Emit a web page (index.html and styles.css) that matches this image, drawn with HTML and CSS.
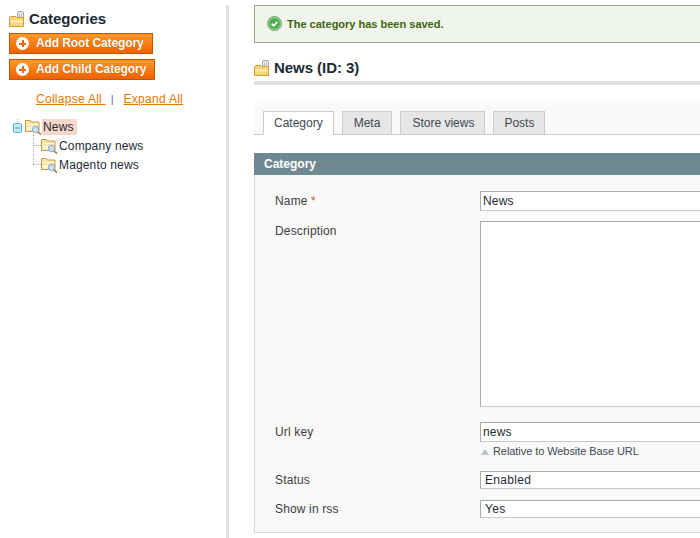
FILE: index.html
```html
<!DOCTYPE html>
<html lang="en">
<head>
<meta charset="utf-8">
<title>Categories</title>
<link rel="stylesheet" href="styles.css">
</head>
<body>
<div class="page">
  <aside class="side">
    <div class="side-head">
      <svg class="head-icon" viewBox="0 0 16 16" width="16" height="16"><use href="#cat"/></svg>
      <h3>Categories</h3>
    </div>
    <button class="btn btn-root"><span class="plus"></span>Add Root Category</button>
    <button class="btn btn-child"><span class="plus"></span>Add Child Category</button>
    <div class="links"><a href="#">Collapse All&nbsp;</a><span class="sep">|</span><a href="#">Expand All</a></div>
    <div class="tree">
      <div class="node root">
        <svg class="toggle" width="10" height="16" viewBox="0 0 10 16"><path d="M5 0v4" stroke="#aaa" stroke-dasharray="1 1"/><rect x=".5" y="4.500" width="8" height="9" rx="1" fill="#c6e8f2" stroke="#55b6d2"/><path d="M2.500 9h4" stroke="#3a8fa8"/></svg>
        <svg class="folder" width="17" height="16" viewBox="0 0 17 16"><use href="#folder"/></svg>
        <span class="sel">News</span>
      </div>
      <div class="node child first">
        <svg class="folder" width="17" height="16" viewBox="0 0 17 16"><use href="#folder"/></svg>
        <span>Company news</span>
      </div>
      <div class="node child">
        <svg class="folder" width="17" height="16" viewBox="0 0 17 16"><use href="#folder"/></svg>
        <span>Magento news</span>
      </div>
    </div>
  </aside>
  <main class="main">
    <div class="msg">
      <svg width="15" height="15" viewBox="0 0 16 16"><circle cx="8" cy="8" r="7.500" fill="#8fcf8f" stroke="#7d9e7d"/><circle cx="8" cy="8" r="5.800" fill="#4fae4f"/><path d="M5 8.200l2.200 2.200L11 6.300" fill="none" stroke="#fff" stroke-width="1.800"/></svg>
      <span>The category has been saved.</span>
    </div>
    <div class="title">
      <svg class="head-icon" viewBox="0 0 16 16" width="16" height="16"><use href="#cat"/></svg>
      <h3>News (ID: 3)</h3>
    </div>
    <div class="tabs">
      <a class="tab active">Category</a>
      <a class="tab">Meta</a>
      <a class="tab">Store views</a>
      <a class="tab">Posts</a>
    </div>
    <div class="sec-head">Category</div>
    <div class="fieldset">
      <div class="row r-name"><label>Name <em>*</em></label><input type="text" value="News"></div>
      <div class="row r-desc"><label>Description</label><textarea></textarea></div>
      <div class="row r-url"><label>Url key</label>
        <div class="ctl"><input type="text" value="news"><p class="note">Relative to Website Base URL</p></div>
      </div>
      <div class="row r-status"><label>Status</label><select><option>Enabled</option></select></div>
      <div class="row r-rss"><label>Show in rss</label><select><option>Yes</option></select></div>
    </div>
  </main>
</div>
<svg class="defs" width="0" height="0">
  <defs>
    <g id="cat">
      <rect x="8.500" y="0.500" width="6" height="10" rx="1.500" fill="#ececec" stroke="#a5a5a5"/>
      <path d="M10.500 2.500v6M12.500 2.500v6" stroke="#bbb"/>
      <path d="M.5 15.500v-9l1.500-1h5l1 1h6.500v9z" fill="#f6d678" stroke="#d99b2e"/>
      <path d="M1 9.500h13v2H1z" fill="#fdf0b8"/>
    </g>
    <g id="folder">
      <path d="M.5 12.500v-11h5l1 1.500h7.500v9.500z" fill="#fbe6a4" stroke="#c99a45"/>
      <path d="M2 5h11v6.500H2z" fill="#fff8dc"/>
      <path d="M2 7h11" stroke="#f0d590"/>
      <circle cx="10.500" cy="10.500" r="3.200" fill="#c8e0f2" stroke="#8aa6bd"/>
      <path d="M13 13l3 2.500" stroke="#a86a2c" stroke-width="1.500"/>
    </g>
  </defs>
</svg>
</body>
</html>
```
FILE: styles.css
```css
* { box-sizing: border-box; }
html, body { margin: 0; height: 538px; overflow: hidden; background: #fff; }
body { font: 12px/16px Arial, "Liberation Sans", sans-serif; color: #2f2f2f; }
.page { display: flex; width: 1100px; height: 538px; padding-top: 5px; }
.defs { position: absolute; }

.side { width: 229px; flex: none; border-right: 3px solid #dfdfdf; padding: 5px 0 0 9px; }
.side-head { display: flex; align-items: center; gap: 4px; height: 18px; margin-bottom: 5px; }
.side-head h3, .title h3 { margin: 0; font-size: 15px; line-height: 18px; font-weight: bold; color: #1d2a33; letter-spacing: -.05px; }
.btn {
  display: flex; align-items: center; height: 21px; padding: 0 0 2px; margin: 0 0 5px; white-space: nowrap;
  font: bold 12px/16px Arial, "Liberation Sans", sans-serif; color: #fff; letter-spacing: -.1px;
  border: 1px solid #c25700; background: linear-gradient(#ff9a2e 0%, #fb8218 40%, #ee6200 100%);
  text-shadow: 0 0 1px #b35000; border-radius: 0;
}
.btn-root { width: 144px; }
.btn-child { width: 146px; }
.plus { width: 13px; height: 13px; margin: 2px 7px 0 6px; flex: none; border-radius: 50%; background:
  linear-gradient(#e9661a, #e9661a) center/7px 2px no-repeat,
  linear-gradient(#e9661a, #e9661a) center/2px 7px no-repeat, #fff; }
.links { display: flex; padding: 6px 0 0 27px; height: 31px; }
.links a { color: #ea7601; text-decoration: underline; letter-spacing: .28px; }
.links .sep { color: #6f5fa8; margin: 0 10px 0 5px; font-size: 11px; }
.tree { margin-top: 1px; padding-left: 4px; color: #1e2a35; }
.node { display: flex; align-items: center; height: 19px; position: relative; letter-spacing: .15px; }
.toggle { margin-right: 2px; }
.folder { flex: none; }
.sel { background: #f6d7c9; padding: 0 3px 0 1px; line-height: 16px; margin-left: 0; }
.child { padding-left: 28px; }
.child span { margin-left: 1px; }
.child::before { content: ""; position: absolute; left: 20px; width: 8px; height: 1px; top: 9px; border-top: 1px dotted #aaa; }
.child.first::after { content: ""; position: absolute; left: 20px; top: -2px; height: 30px; border-left: 1px dotted #aaa; }

.main { flex: none; width: 871px; margin-left: 25px; }
.msg {
  display: flex; align-items: center; gap: 5px; height: 38px; padding: 0 0 1px 12px;
  background: #eff5ea; border: 1px solid #95a486; font-size: 11px; font-weight: bold; color: #3d6611;
}
.title { display: flex; align-items: center; gap: 4px; height: 42px; padding-top: 11px; padding-bottom: 0; border-bottom: 4px solid #dfdfdf; }
.tabs {
  display: flex; align-items: flex-end; gap: 8px; height: 32px; margin-top: 18px; padding-left: 9px;
  background: #f9f9f9; border-bottom: 1px solid #ccc;
}
.tab {
  height: 24px; padding: 3px 10px 0; margin-bottom: -1px; border: 1px solid #ccc; background: #e6e6e6; color: #3d4a52; line-height: 17px;
}
.tab:nth-child(2) { padding: 3px 11px 0; }
.tab:nth-child(3) { padding: 3px 10px 0 11px; }
.tab.active { background: #fff; border-bottom-color: #fff; }
.sec-head { height: 22px; margin-top: 18px; padding-left: 10px; background: #6f8992; color: #fff; font-weight: bold; line-height: 22px; }
.fieldset { height: 358px; padding-top: 16px; background: #f9f9f9; border: 1px solid #d6d6d6; border-top: 0; }
.row { display: flex; align-items: flex-start; padding-left: 20px; }
.row label { width: 205px; flex: none; color: #3d3d3d; line-height: 18px; letter-spacing: .15px; }
.row label em { color: #d9542f; font-style: normal; }
input, textarea, select {
  width: 600px; margin: 0; background: #fff; border: 1px solid #aaa; border-bottom-color: #c8c8c8; border-right-color: #c8c8c8;
  font: 12px/16px Arial, "Liberation Sans", sans-serif; color: #1e2a35; border-radius: 0; outline: 0; display: block;
}
input { height: 20px; padding: 1px 2px; letter-spacing: .2px; }
textarea { height: 186px; resize: none; padding: 2px 3px; }
select { height: 18px; padding: 0 0 0 4px; appearance: none; letter-spacing: .3px; }
.r-name { height: 30px; }
.r-name label { padding-top: 1px; }
.r-desc { height: 201px; }
.r-desc label { padding-top: 1px; }
.r-url { height: 49px; }
.r-url label { padding-top: 1px; }
.note { margin: 2px 0 0; padding-left: 13px; font-size: 11px; line-height: 15px; color: #3f4a52; position: relative; letter-spacing: -.07px; }
.note::before { content: ""; position: absolute; left: 1px; top: 5px; border: 4px solid transparent; border-bottom: 6px solid #b5c2c6; border-top: 0; }
.r-status { height: 29px; }
.r-rss { height: 18px; }
```
